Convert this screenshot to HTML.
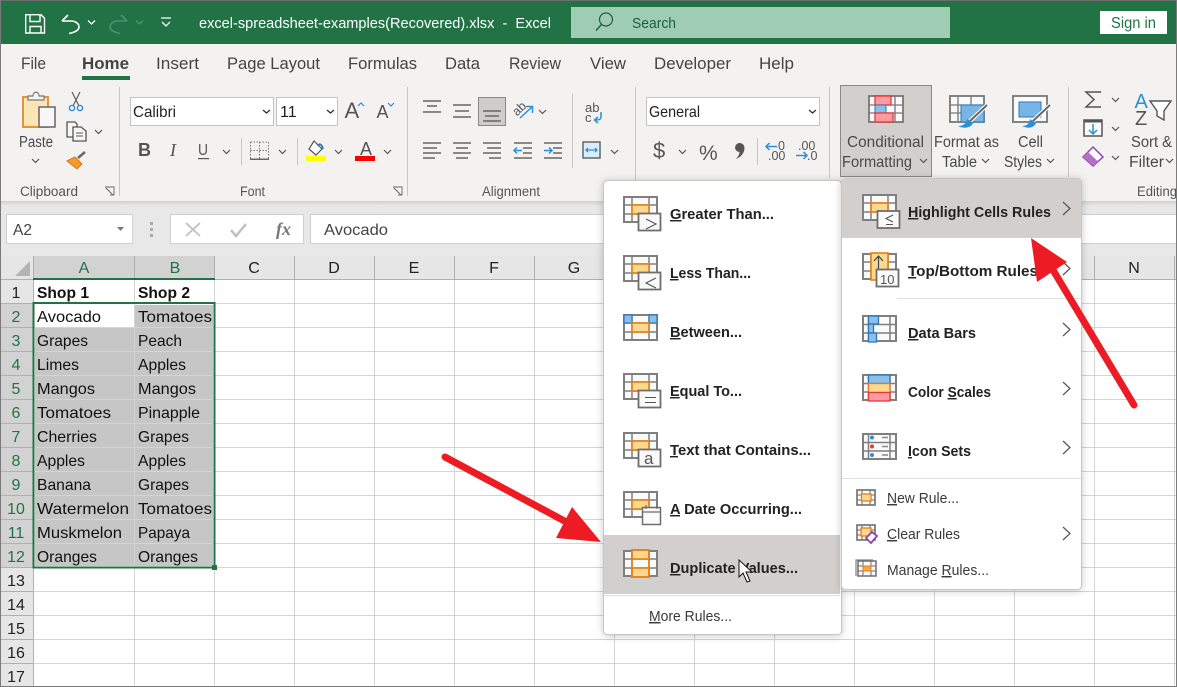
<!DOCTYPE html>
<html lang="en"><head><meta charset="utf-8"><title>Excel</title>
<style>
html,body{margin:0;padding:0;background:#fff;width:1177px;height:687px;overflow:hidden}
svg{display:block;position:absolute;left:0;top:0}
text{font-family:"Liberation Sans",sans-serif;white-space:pre}
.r{font-size:15.5px;fill:#4a4a4a}
.s{font-size:13.5px;fill:#555}
.c{font-size:16px;fill:#111}
.h{font-size:16px;fill:#222;text-anchor:middle}
.hs{font-size:16px;fill:#217346;text-anchor:middle}
.m{font-size:14.5px;font-weight:bold;fill:#222}
.n{font-size:14.5px;fill:#3a3a3a}
.ch{fill:none;stroke:#555;stroke-width:1.2}
.bl{fill:none;stroke:#2b8fd6;stroke-width:1.5}
.ln{stroke:#666;stroke-width:1.5}
</style></head><body>
<svg width="1177" height="687" viewBox="0 0 1177 687" xmlns="http://www.w3.org/2000/svg">
<defs>
<linearGradient id="sh" x1="0" y1="0" x2="0" y2="1"><stop offset="0" stop-color="#d0d0d0"/><stop offset="1" stop-color="#e8e8e8"/></linearGradient>
<g id="g">
<rect x="1" y="1" width="33" height="25" fill="#fafafa" stroke="#7f7f7f" stroke-width="2"/>
<path d="M9 1V26M26 1V26M1 9H34M1 18H34" stroke="#7f7f7f" stroke-width="1.5" fill="none"/>
</g>
<g id="g2">
<rect x="1" y="1" width="33" height="25" fill="#fafafa" stroke="#7f7f7f" stroke-width="2"/>
<path d="M6.500 1V26M28 1V26M1 9.500H34M1 18H34" stroke="#7f7f7f" stroke-width="1.500" fill="none"/>
</g>
<g id="o"><rect x="9" y="9" width="17" height="9" fill="#fbd98e" stroke="#e67e15" stroke-width="1.6"/></g>
<g id="b"><rect x="15.5" y="17.5" width="22" height="17" fill="#fafafa" stroke="#6e6e6e" stroke-width="1.8"/></g>
<g id="sm">
<rect x="1" y="1" width="18" height="15" fill="#fafafa" stroke="#6e6e6e" stroke-width="1.6"/>
<path d="M6 1V16M14 1V16M1 6H19M1 11H19" stroke="#6e6e6e" stroke-width="1.1" fill="none"/>
</g>
<path id="chev" d="M0 0L3.500 3.500L7 0" class="ch"/>
<path id="rchev" d="M0 0L7 6.500L0 13" fill="none" stroke="#555" stroke-width="1.200"/>
</defs>

<rect width="1177" height="687" fill="#fff"/>
<!-- title bar -->
<rect x="0" y="0" width="1177" height="44" fill="#217346"/>
<rect x="0" y="0" width="1177" height="1" fill="#6d6d6d"/>
<g fill="none" stroke="#fff" stroke-width="1.400">
<path d="M25.700 14.700H41L44.500 18.200V33H25.700Z"/><path d="M30 15V21.500H40V15M30 33V26.500H41V33"/>
<path d="M62 21L68 15M62 21H71C76 21 79 24 79 27C79 30 76 32 69 33.500" stroke-width="1.600"/>
<path d="M88 20.500L91.500 24L95 20.500" stroke-width="1.300"/>
</g>
<g fill="none" stroke="#4e9270" stroke-width="1.600">
<path d="M127 21L121 15M127 21H118C113 21 110 24 110 27C110 30 113 32 120 33.500"/>
<path d="M136 20.500L139.500 24L143 20.500" stroke-width="1.300"/>
</g>
<path d="M161 18H171M162 22L166 26L170 22" fill="none" stroke="#fff" stroke-width="1.300"/>
<text x="199" y="28" font-size="15" fill="#fff" textLength="352" lengthAdjust="spacingAndGlyphs">excel-spreadsheet-examples(Recovered).xlsx  -  Excel</text>
<rect x="571" y="7" width="379" height="31" fill="#9fcdb3"/>
<circle cx="606" cy="19.500" r="6.500" fill="none" stroke="#1f5e3a" stroke-width="1.200"/>
<path d="M601.500 24.500L596 30.500" stroke="#1f5e3a" stroke-width="1.400"/>
<text x="632" y="28" font-size="15" fill="#1f5e3a" textLength="44" lengthAdjust="spacingAndGlyphs">Search</text>
<rect x="1100" y="11" width="67" height="23" fill="#fff"/>
<text x="1111" y="28" font-size="15.500" fill="#217346" textLength="45" lengthAdjust="spacingAndGlyphs">Sign in</text>

<!-- ribbon -->
<rect x="0" y="44" width="1177" height="157" fill="#f3f2f1"/>
<rect x="0" y="201" width="1177" height="5" fill="url(#sh)"/>
<rect x="0" y="206" width="1177" height="50" fill="#e8e8e8"/>
<g font-size="17" fill="#444">
<text x="21" y="69" textLength="25" lengthAdjust="spacingAndGlyphs">File</text>
<text x="82" y="69" font-weight="bold" textLength="47" lengthAdjust="spacingAndGlyphs">Home</text>
<text x="156" y="69" textLength="43" lengthAdjust="spacingAndGlyphs">Insert</text>
<text x="227" y="69" textLength="93" lengthAdjust="spacingAndGlyphs">Page Layout</text>
<text x="348" y="69" textLength="69" lengthAdjust="spacingAndGlyphs">Formulas</text>
<text x="445" y="69" textLength="35" lengthAdjust="spacingAndGlyphs">Data</text>
<text x="509" y="69" textLength="52" lengthAdjust="spacingAndGlyphs">Review</text>
<text x="590" y="69" textLength="36" lengthAdjust="spacingAndGlyphs">View</text>
<text x="654" y="69" textLength="77" lengthAdjust="spacingAndGlyphs">Developer</text>
<text x="759" y="69" textLength="35" lengthAdjust="spacingAndGlyphs">Help</text>
</g>
<rect x="82" y="76" width="48" height="4" fill="#217346"/>
<g fill="#c8c6c4">
<rect x="119" y="87" width="1" height="109"/><rect x="407" y="87" width="1" height="109"/>
<rect x="635" y="87" width="1" height="109"/><rect x="829" y="87" width="1" height="91"/>
<rect x="1068" y="87" width="1" height="90"/><rect x="572" y="94" width="1" height="74"/>
<rect x="241" y="138" width="1" height="27"/><rect x="297" y="138" width="1" height="27"/>
<rect x="757" y="138" width="1" height="27"/>
</g>
<!-- clipboard -->
<rect x="23" y="97" width="25" height="30" fill="#fde6b4" stroke="#e08a2e" stroke-width="1.800"/>
<path d="M28 100V96H33C33 91 39 91 39 96H44V100Z" fill="#f3f2f1" stroke="#777" stroke-width="1.200"/>
<rect x="39" y="107" width="16" height="20" fill="#f7f7f7" stroke="#666" stroke-width="1.500"/>
<text x="19" y="147" class="r" textLength="34" lengthAdjust="spacingAndGlyphs">Paste</text>
<use href="#chev" x="32" y="159"/>
<path d="M72 92L79 106M80 92L73 106" stroke="#555" stroke-width="1.100"/>
<circle cx="72" cy="108" r="2.600" fill="none" stroke="#2b8fd6" stroke-width="1.400"/>
<circle cx="80" cy="108" r="2.600" fill="none" stroke="#2b8fd6" stroke-width="1.400"/>
<path d="M67 122H75L77 124V137H67Z" fill="#f7f7f7" stroke="#555" stroke-width="1.300"/>
<path d="M73 127H81L86 131V141H73Z" fill="#f7f7f7" stroke="#555" stroke-width="1.300"/>
<path d="M76 133H83M76 136H83" stroke="#555"/>
<use href="#chev" x="95" y="130"/>
<path d="M67 161L75 157L82 164L77 169Z" fill="#f39a2d" stroke="#d9761a"/>
<path d="M78 158L85 152" stroke="#666" stroke-width="2.500"/>
<text x="20" y="196" class="s" textLength="58" lengthAdjust="spacingAndGlyphs">Clipboard</text>
<path d="M105 187H114V195M106 188L113 195M110 195H114V191" fill="none" stroke="#666" stroke-width=".9"/>
<!-- font -->
<rect x="130.500" y="97.500" width="143" height="28" fill="#fff" stroke="#c4c4c4"/>
<text x="133" y="117" font-size="16" fill="#222" textLength="43" lengthAdjust="spacingAndGlyphs">Calibri</text>
<path d="M263 110L266.500 113L270 110" fill="none" stroke="#333" stroke-width="1.300"/>
<rect x="276.500" y="97.500" width="61" height="28" fill="#fff" stroke="#c4c4c4"/>
<text x="280" y="117" font-size="16" fill="#222">11</text>
<path d="M327 110L330.500 113L334 110" fill="none" stroke="#333" stroke-width="1.300"/>
<text x="344.500" y="118" font-size="22" fill="#555">A</text>
<path d="M358 106L361 103L364 106" fill="none" stroke="#2b8fd6" stroke-width="1.200"/>
<text x="376.500" y="118" font-size="18" fill="#555">A</text>
<path d="M388 103L391 106L394 103" fill="none" stroke="#2b8fd6" stroke-width="1.200"/>
<text x="138" y="156" font-size="18" font-weight="bold" fill="#555">B</text>
<text x="170" y="156" font-size="18" font-style="italic" style="font-family:'Liberation Serif',serif" fill="#555">I</text>
<text x="198" y="155" font-size="16" fill="#555" textLength="10" lengthAdjust="spacingAndGlyphs">U</text>
<rect x="198" y="158" width="11" height="1.200" fill="#555"/>
<use href="#chev" x="223" y="150"/>
<path d="M250.500 142H268.500M250.500 142V159M268.500 142V159M259.500 142V159M250.500 150.500H268.500" stroke="#777" stroke-dasharray="1.500 1.500" fill="none"/>
<rect x="250" y="158.500" width="19" height="1.500" fill="#666"/>
<use href="#chev" x="279" y="150"/>
<path d="M314 141L322 149L316 155L309 149Z" fill="#fff" stroke="#555" stroke-width="1.200"/>
<path d="M318 146C319 143 322 144 323 149" fill="none" stroke="#2b78b8" stroke-width="1.800"/>
<rect x="306" y="156" width="20" height="5" fill="#ffff00"/>
<use href="#chev" x="335" y="150"/>
<text x="360" y="155" font-size="18" fill="#555">A</text>
<rect x="355" y="156" width="20" height="5" fill="#ff0000"/>
<use href="#chev" x="384" y="150"/>
<text x="240" y="196" class="s" textLength="25" lengthAdjust="spacingAndGlyphs">Font</text>
<path d="M393 187H402V195M394 188L401 195M398 195H402V191" fill="none" stroke="#666" stroke-width=".9"/>
<!-- alignment -->
<rect x="478.500" y="97.500" width="27" height="28" fill="#cfcdcb" stroke="#8a8886"/>
<g class="ln" fill="none">
<path d="M423 101H441M427 106H437M423 112H441"/>
<path d="M453 105H471M455 111H469M453 117H471"/>
<path d="M483 111H501M485 116H499M483 121H501"/>
<path d="M423 143H441M423 148H437M423 153H441M423 158H435"/>
<path d="M453 143H471M456 148H468M453 153H471M456 158H468"/>
<path d="M483 143H501M487 148H501M483 153H501M489 158H501"/>
<path d="M514 143H532M523 148H532M523 153H532M514 158H532"/>
<path d="M544 143H562M553 148H562M553 153H562M544 158H562"/>
</g>
<path d="M514 150.500H522M517 147.500L514 150.500L517 153.500M544 150.500H552M549 147.500L552 150.500L549 153.500" fill="none" stroke="#2b8fd6" stroke-width="1.500"/>
<text x="512" y="112" font-size="12.500" fill="#555" transform="rotate(-45 520 108)">ab</text>
<path d="M520 118L532 107M526 106.500H532.500V113" class="bl"/>
<use href="#chev" x="539" y="110"/>
<text x="585" y="112" font-size="13" fill="#555">ab</text>
<text x="585" y="122" font-size="13" fill="#555">c</text>
<path d="M601 112V116C601 120 599 120 595 120M598 117L594.500 120L598 123" class="bl"/>
<rect x="583" y="142" width="17" height="16" fill="#d8ecfa" stroke="#666" stroke-width="1.500"/>
<path d="M586 150H597M588 148L586 150L588 152M595 148L597 150L595 152" fill="none" stroke="#2b8fd6" stroke-width="1.300"/>
<use href="#chev" x="611" y="150"/>
<text x="482" y="196" class="s" textLength="58" lengthAdjust="spacingAndGlyphs">Alignment</text>
<!-- number -->
<rect x="646.500" y="97.500" width="173" height="28" fill="#fff" stroke="#c4c4c4"/>
<text x="649" y="117" font-size="16" fill="#222" textLength="51" lengthAdjust="spacingAndGlyphs">General</text>
<path d="M809 110L812.500 113L816 110" fill="none" stroke="#333" stroke-width="1.300"/>
<text x="653" y="158" font-size="22" fill="#555">$</text>
<use href="#chev" x="679" y="150"/>
<text x="699" y="160" font-size="21" fill="#555">%</text>
<path d="M735 147.500A4.500 4.500 0 1 1 744.500 148C744.500 153 741 157 736 159C738.500 156 739.500 154 739.500 152A4.500 4.500 0 0 1 735 147.500Z" fill="#555"/>
<text x="778" y="150" font-size="12.500" fill="#555">0</text>
<text x="768" y="160" font-size="12.500" fill="#555">.00</text>
<path d="M766 146.500H777M769.500 143L766 146.500L769.500 150" class="bl"/>
<text x="798" y="150" font-size="12.500" fill="#555">.00</text>
<text x="807" y="160" font-size="12.500" fill="#555">.0</text>
<path d="M796 155.500H807M803.500 152L807 155.500L803.500 159" class="bl"/>
<!-- styles -->
<rect x="840.500" y="85.500" width="91" height="91" fill="#d2d0ce" stroke="#8a8886"/>
<rect x="869" y="96" width="34" height="26" fill="#fafafa" stroke="#777" stroke-width="1.800"/>
<path d="M877 96V122M895 96V122M869 105H903M869 113H903" stroke="#777" stroke-width="1.300" fill="none"/>
<rect x="875" y="96" width="16" height="9" fill="#ff9aa2" stroke="#e53935" stroke-width="1.300"/>
<rect x="875" y="105" width="11" height="8" fill="#8cbfea" stroke="#2b78b8" stroke-width="1"/>
<rect x="875" y="113" width="18" height="9" fill="#ff9aa2" stroke="#e53935" stroke-width="1.300"/>
<text x="847" y="147" class="r" textLength="77" lengthAdjust="spacingAndGlyphs">Conditional</text>
<text x="842" y="167" class="r" textLength="70" lengthAdjust="spacingAndGlyphs">Formatting</text>
<use href="#chev" x="920" y="159"/>
<rect x="950" y="96" width="34" height="26" fill="#fafafa" stroke="#777" stroke-width="1.800"/>
<path d="M958 96V122M971 96V122M950 105H984M950 113H984" stroke="#777" stroke-width="1.300" fill="none"/>
<rect x="961" y="105" width="23" height="17" fill="#79b4e6" stroke="#2b78b8"/>
<path d="M987 105L970 121" stroke="#fff" stroke-width="4"/>
<path d="M987 105L970 121" stroke="#666" stroke-width="2"/>
<path d="M958 126C963 126 966 124 967 119L973 123C971 128 964 129 958 126Z" fill="#2b8fd6"/>
<text x="934" y="147" class="r" textLength="65" lengthAdjust="spacingAndGlyphs">Format as</text>
<text x="942" y="167" class="r" textLength="35" lengthAdjust="spacingAndGlyphs">Table</text>
<use href="#chev" x="982" y="159"/>
<rect x="1013" y="96" width="34" height="26" fill="#fafafa" stroke="#777" stroke-width="1.800"/>
<rect x="1019" y="102" width="22" height="15" fill="#79b4e6" stroke="#2b78b8"/>
<path d="M1050 105L1033 121" stroke="#fff" stroke-width="4"/>
<path d="M1050 105L1033 121" stroke="#666" stroke-width="2"/>
<path d="M1022 126C1027 126 1029 124 1030 119L1036 123C1034 128 1028 129 1022 126Z" fill="#2b8fd6"/>
<text x="1018" y="147" class="r" textLength="25" lengthAdjust="spacingAndGlyphs">Cell</text>
<text x="1004" y="167" class="r" textLength="38" lengthAdjust="spacingAndGlyphs">Styles</text>
<use href="#chev" x="1047" y="159"/>
<!-- editing -->
<path d="M1101 92H1086L1094 99.500L1086 107H1101" fill="none" stroke="#555" stroke-width="1.500"/>
<use href="#chev" x="1112" y="98"/>
<rect x="1084" y="120" width="18" height="16" fill="#fafafa" stroke="#555" stroke-width="1.500"/>
<rect x="1084" y="120" width="18" height="2.500" fill="#555"/>
<path d="M1093 124V133M1089 130L1093 134L1097 130" class="bl"/>
<use href="#chev" x="1112" y="127"/>
<path d="M1083 157L1093 147L1103 157L1093 166Z" fill="#fff" stroke="#8e44ad" stroke-width="1.500"/>
<path d="M1083 157L1088 152L1098 161.500L1093 166Z" fill="#b46fc8"/>
<use href="#chev" x="1112" y="156"/>
<text x="1134.500" y="108" font-size="20" fill="#2b8fd6">A</text>
<text x="1135" y="125" font-size="20" fill="#555">Z</text>
<path d="M1150 101H1171L1164 111V120L1157 116V111Z" fill="#fff" stroke="#555" stroke-width="1.400"/>
<text x="1131" y="147" class="r" textLength="41" lengthAdjust="spacingAndGlyphs">Sort &amp;</text>
<text x="1129" y="167" class="r" textLength="35" lengthAdjust="spacingAndGlyphs">Filter</text>
<use href="#chev" x="1166" y="159"/>
<text x="1137" y="196" class="s" textLength="40" lengthAdjust="spacingAndGlyphs">Editing</text>

<!-- formula bar -->
<rect x="6.500" y="214.500" width="126" height="29" fill="#fff" stroke="#d0d0d0"/>
<text x="13" y="235" font-size="16" fill="#444" textLength="19" lengthAdjust="spacingAndGlyphs">A2</text>
<path d="M117 227H124L120.500 231Z" fill="#777"/>
<g fill="#aaa"><rect x="150" y="222" width="3" height="3"/><rect x="150" y="228" width="3" height="3"/><rect x="150" y="234" width="3" height="3"/></g>
<rect x="170.500" y="214.500" width="133" height="29" fill="#fff" stroke="#d0d0d0"/>
<path d="M186 223L200 236M200 223L186 236" stroke="#c0c0c0" stroke-width="1.800"/>
<path d="M231 230L236 236L246 224" fill="none" stroke="#c0c0c0" stroke-width="2.500"/>
<text x="276" y="235" font-size="18" font-style="italic" font-weight="bold" style="font-family:'Liberation Serif',serif" fill="#777">fx</text>
<rect x="310.500" y="214.500" width="870" height="29" fill="#fff" stroke="#d0d0d0"/>
<text x="324" y="235" font-size="16" fill="#444" textLength="64" lengthAdjust="spacingAndGlyphs">Avocado</text>

<!-- sheet -->
<rect x="0" y="256" width="1177" height="23" fill="#e6e6e6"/>
<rect x="0" y="279" width="33" height="408" fill="#e6e6e6"/>
<rect x="33" y="256" width="182" height="23" fill="#d2d2d2"/>
<rect x="0" y="303" width="33" height="264" fill="#d2d2d2"/>
<path d="M15 276H30V261Z" fill="#b4b4b4"/>
<g stroke="#d4d4d4" fill="none">
<path d="M134.500 279V687M214.500 279V687M294.500 279V687M374.500 279V687M454.500 279V687M534.500 279V687M614.500 279V687M694.500 279V687M774.500 279V687M854.500 279V687M934.500 279V687M1014.500 279V687M1094.500 279V687M1174.500 279V687"/>
<path d="M33 303.500H1177M33 327.500H1177M33 351.500H1177M33 375.500H1177M33 399.500H1177M33 423.500H1177M33 447.500H1177M33 471.500H1177M33 495.500H1177M33 519.500H1177M33 543.500H1177M33 567.500H1177M33 591.500H1177M33 615.500H1177M33 639.500H1177M33 663.500H1177"/>
</g>
<g stroke="#b0b0b0" fill="none">
<path d="M33.500 256V687M134.500 256V279M214.500 256V279M294.500 256V279M374.500 256V279M454.500 256V279M534.500 256V279M614.500 256V279M694.500 256V279M774.500 256V279M854.500 256V279M934.500 256V279M1014.500 256V279M1094.500 256V279M1174.500 256V279"/>
<path d="M0 279.500H1177M0 303.500H33M0 327.500H33M0 351.500H33M0 375.500H33M0 399.500H33M0 423.500H33M0 447.500H33M0 471.500H33M0 495.500H33M0 519.500H33M0 543.500H33M0 567.500H33M0 591.500H33M0 615.500H33M0 639.500H33M0 663.500H33"/>
</g>
<rect x="135" y="305" width="78" height="22" fill="#c6c6c6"/>
<g fill="#c6c6c6">
<rect x="35" y="328" width="99" height="23"/><rect x="135" y="328" width="78" height="23"/>
<rect x="35" y="352" width="99" height="23"/><rect x="135" y="352" width="78" height="23"/>
<rect x="35" y="376" width="99" height="23"/><rect x="135" y="376" width="78" height="23"/>
<rect x="35" y="400" width="99" height="23"/><rect x="135" y="400" width="78" height="23"/>
<rect x="35" y="424" width="99" height="23"/><rect x="135" y="424" width="78" height="23"/>
<rect x="35" y="448" width="99" height="23"/><rect x="135" y="448" width="78" height="23"/>
<rect x="35" y="472" width="99" height="23"/><rect x="135" y="472" width="78" height="23"/>
<rect x="35" y="496" width="99" height="23"/><rect x="135" y="496" width="78" height="23"/>
<rect x="35" y="520" width="99" height="23"/><rect x="135" y="520" width="78" height="23"/>
<rect x="35" y="544" width="99" height="22"/><rect x="135" y="544" width="78" height="22"/>
</g>
<rect x="33" y="278" width="182" height="2" fill="#217346"/>
<rect x="33.500" y="303" width="181" height="264.500" fill="none" stroke="#217346" stroke-width="2"/>
<rect x="212" y="565" width="5" height="5" fill="#217346"/>
<text x="84" y="273" class="hs">A</text><text x="175" y="273" class="hs">B</text>
<text x="254" y="273" class="h">C</text><text x="334" y="273" class="h">D</text><text x="414" y="273" class="h">E</text><text x="494" y="273" class="h">F</text><text x="574" y="273" class="h">G</text><text x="1134" y="273" class="h">N</text>
<text x="16" y="298" class="h">1</text>
<text x="16" y="586" class="h">13</text><text x="16" y="610" class="h">14</text><text x="16" y="634" class="h">15</text><text x="16" y="658" class="h">16</text><text x="16" y="682" class="h">17</text>
<text x="16" y="322" class="hs">2</text><text x="16" y="346" class="hs">3</text><text x="16" y="370" class="hs">4</text><text x="16" y="394" class="hs">5</text><text x="16" y="418" class="hs">6</text><text x="16" y="442" class="hs">7</text><text x="16" y="466" class="hs">8</text><text x="16" y="490" class="hs">9</text><text x="16" y="514" class="hs">10</text><text x="16" y="538" class="hs">11</text><text x="16" y="562" class="hs">12</text>
<g class="c">
<text x="37" y="298" font-weight="bold" textLength="52" lengthAdjust="spacingAndGlyphs">Shop 1</text>
<text x="138" y="298" font-weight="bold" textLength="52" lengthAdjust="spacingAndGlyphs">Shop 2</text>
<text x="37" y="322" textLength="64" lengthAdjust="spacingAndGlyphs">Avocado</text>
<text x="138" y="322" textLength="74" lengthAdjust="spacingAndGlyphs">Tomatoes</text>
<text x="37" y="346" textLength="51" lengthAdjust="spacingAndGlyphs">Grapes</text>
<text x="138" y="346" textLength="44" lengthAdjust="spacingAndGlyphs">Peach</text>
<text x="37" y="370" textLength="42" lengthAdjust="spacingAndGlyphs">Limes</text>
<text x="138" y="370" textLength="48" lengthAdjust="spacingAndGlyphs">Apples</text>
<text x="37" y="394" textLength="58" lengthAdjust="spacingAndGlyphs">Mangos</text>
<text x="138" y="394" textLength="58" lengthAdjust="spacingAndGlyphs">Mangos</text>
<text x="37" y="418" textLength="74" lengthAdjust="spacingAndGlyphs">Tomatoes</text>
<text x="138" y="418" textLength="62" lengthAdjust="spacingAndGlyphs">Pinapple</text>
<text x="37" y="442" textLength="60" lengthAdjust="spacingAndGlyphs">Cherries</text>
<text x="138" y="442" textLength="51" lengthAdjust="spacingAndGlyphs">Grapes</text>
<text x="37" y="466" textLength="48" lengthAdjust="spacingAndGlyphs">Apples</text>
<text x="138" y="466" textLength="48" lengthAdjust="spacingAndGlyphs">Apples</text>
<text x="37" y="490" textLength="54" lengthAdjust="spacingAndGlyphs">Banana</text>
<text x="138" y="490" textLength="51" lengthAdjust="spacingAndGlyphs">Grapes</text>
<text x="37" y="514" textLength="92" lengthAdjust="spacingAndGlyphs">Watermelon</text>
<text x="138" y="514" textLength="74" lengthAdjust="spacingAndGlyphs">Tomatoes</text>
<text x="37" y="538" textLength="85" lengthAdjust="spacingAndGlyphs">Muskmelon</text>
<text x="138" y="538" textLength="52" lengthAdjust="spacingAndGlyphs">Papaya</text>
<text x="37" y="562" textLength="60" lengthAdjust="spacingAndGlyphs">Oranges</text>
<text x="138" y="562" textLength="60" lengthAdjust="spacingAndGlyphs">Oranges</text>
</g>

<!-- menu 1 -->
<rect x="603.500" y="180.500" width="238" height="454" rx="4" fill="#fff" stroke="#c8c6c4" style="filter:drop-shadow(0 1px 4px rgba(0,0,0,.22))"/>
<rect x="604" y="535" width="236" height="59" fill="#d2d0ce"/>
<rect x="604" y="595" width="236" height="1" fill="#e1dfdd"/>
<use href="#g" x="623" y="196"/><use href="#o" x="623" y="196"/><use href="#b" x="623" y="196"/>
<path d="M646 219L656 224L646 229" fill="none" stroke="#555" stroke-width="1.100"/>
<use href="#g" x="623" y="255"/><use href="#o" x="623" y="255"/><use href="#b" x="623" y="255"/>
<path d="M656 278L646 283L656 288" fill="none" stroke="#555" stroke-width="1.100"/>
<use href="#g" x="623" y="314"/>
<rect x="624" y="315" width="8" height="8" fill="#8cbfea" stroke="#2b78b8" stroke-width="1.200"/>
<rect x="649" y="315" width="8" height="8" fill="#8cbfea" stroke="#2b78b8" stroke-width="1.200"/>
<use href="#o" x="623" y="314"/>
<use href="#g" x="623" y="373"/><use href="#o" x="623" y="373"/><use href="#b" x="623" y="373"/>
<path d="M645 397.500H656M645 402.500H656" stroke="#555" stroke-width="1.100"/>
<use href="#g" x="623" y="432"/><use href="#o" x="623" y="432"/><use href="#b" x="623" y="432"/>
<text x="644" y="464" font-size="17" fill="#555">a</text>
<use href="#g" x="623" y="491"/><use href="#o" x="623" y="491"/>
<rect x="642.500" y="507.500" width="18" height="17" fill="#fafafa" stroke="#6e6e6e" stroke-width="1.500"/>
<path d="M642 512H661M646 505V509M657 505V509" stroke="#6e6e6e" stroke-width="1.200"/>
<use href="#g" x="623" y="550"/>
<rect x="632" y="550" width="17" height="9" fill="#fbd98e" stroke="#e67e15" stroke-width="1.600"/>
<rect x="632" y="568" width="17" height="9" fill="#fbd98e" stroke="#e67e15" stroke-width="1.600"/>
<rect x="632" y="550" width="17" height="27" fill="none" stroke="#e67e15" stroke-width="1.600"/>
<text x="670" y="219" class="m" textLength="104" lengthAdjust="spacingAndGlyphs"><tspan text-decoration="underline">G</tspan>reater Than...</text>
<text x="670" y="278" class="m" textLength="81" lengthAdjust="spacingAndGlyphs"><tspan text-decoration="underline">L</tspan>ess Than...</text>
<text x="670" y="337" class="m" textLength="72" lengthAdjust="spacingAndGlyphs"><tspan text-decoration="underline">B</tspan>etween...</text>
<text x="670" y="396" class="m" textLength="72" lengthAdjust="spacingAndGlyphs"><tspan text-decoration="underline">E</tspan>qual To...</text>
<text x="670" y="455" class="m" textLength="141" lengthAdjust="spacingAndGlyphs"><tspan text-decoration="underline">T</tspan>ext that Contains...</text>
<text x="670" y="514" class="m" textLength="132" lengthAdjust="spacingAndGlyphs"><tspan text-decoration="underline">A</tspan> Date Occurring...</text>
<text x="670" y="573" class="m" textLength="128" lengthAdjust="spacingAndGlyphs"><tspan text-decoration="underline">D</tspan>uplicate Values...</text>
<text x="649" y="621" class="n" textLength="83" lengthAdjust="spacingAndGlyphs"><tspan text-decoration="underline">M</tspan>ore Rules...</text>

<!-- menu 2 -->
<rect x="841.500" y="178.500" width="240" height="411" rx="4" fill="#fff" stroke="#c8c6c4" style="filter:drop-shadow(0 1px 4px rgba(0,0,0,.22))"/>
<rect x="842" y="179" width="239" height="59" fill="#d2d0ce"/>
<rect x="897" y="298" width="184" height="1" fill="#e1dfdd"/>
<rect x="842" y="478" width="239" height="1" fill="#e1dfdd"/>
<use href="#g" x="862" y="194"/><use href="#o" x="862" y="194"/><use href="#b" x="862" y="193.500"/>
<path d="M893 215L886 218.500L893 222M886 224.500H893" fill="none" stroke="#555" stroke-width="1.100"/>
<use href="#g" x="862" y="253"/>
<rect x="871" y="253" width="17" height="27" fill="#fbd98e" stroke="#e67e15" stroke-width="1.600"/>
<path d="M878.500 257V270M874 261L878.500 256L883 261" fill="none" stroke="#444" stroke-width="1.200"/>
<use href="#b" x="861" y="252"/>
<text x="880" y="284" font-size="13" fill="#555">10</text>
<use href="#g2" x="862" y="315"/>
<rect x="868.500" y="316" width="10" height="8" fill="#8cbfea" stroke="#2b78b8" stroke-width="1.300"/>
<rect x="868.500" y="324" width="5" height="9" fill="#8cbfea" stroke="#2b78b8" stroke-width="1.300"/>
<rect x="868.500" y="333" width="8" height="9" fill="#8cbfea" stroke="#2b78b8" stroke-width="1.300"/>
<use href="#g2" x="862" y="374"/>
<rect x="868.500" y="375" width="21.500" height="8.500" fill="#8cbfea" stroke="#2b78b8" stroke-width="1.300"/>
<rect x="868.500" y="383.500" width="21.500" height="9" fill="#fbd98e" stroke="#e67e15" stroke-width="1.300"/>
<rect x="868.500" y="392.500" width="21.500" height="8.500" fill="#ff9aa2" stroke="#e53935" stroke-width="1.300"/>
<use href="#g2" x="862" y="433"/>
<circle cx="872" cy="437.500" r="2" fill="#2b8fd6"/><circle cx="872" cy="446.500" r="2" fill="#e53935"/><circle cx="872" cy="455" r="2" fill="#2b8fd6"/>
<path d="M882 437.500H888M882 446.500H888M882 455H888" stroke="#888" stroke-width="1.500"/>
<use href="#sm" x="856" y="489"/>
<rect x="861.500" y="494" width="9.500" height="7" fill="#fbd98e" stroke="#e67e15" stroke-width="1.300"/>
<use href="#sm" x="856" y="524"/>
<rect x="861" y="528" width="10" height="8" fill="#fbd98e" stroke="#e67e15" stroke-width="1.300"/>
<path d="M866 538L872 532L877 536L871 543Z" fill="#fff" stroke="#8e44ad" stroke-width="1.800"/>
<path d="M856 576V560H873" fill="none" stroke="#888" stroke-width="1.300"/>
<rect x="858" y="561" width="18" height="15" fill="#fafafa" stroke="#6e6e6e" stroke-width="1.500"/>
<path d="M863 561V576M871 561V576M858 566H876M858 571H876" stroke="#6e6e6e"/>
<rect x="863" y="566" width="8" height="5" fill="#f4a742" stroke="#e67e15"/>
<text x="908" y="217" class="m" textLength="143" lengthAdjust="spacingAndGlyphs"><tspan text-decoration="underline">H</tspan>ighlight Cells Rules</text>
<text x="908" y="276" class="m" textLength="130" lengthAdjust="spacingAndGlyphs"><tspan text-decoration="underline">T</tspan>op/Bottom Rules</text>
<text x="908" y="338" class="m" textLength="68" lengthAdjust="spacingAndGlyphs"><tspan text-decoration="underline">D</tspan>ata Bars</text>
<text x="908" y="397" class="m" textLength="83" lengthAdjust="spacingAndGlyphs">Color <tspan text-decoration="underline">S</tspan>cales</text>
<text x="908" y="456" class="m" textLength="63" lengthAdjust="spacingAndGlyphs"><tspan text-decoration="underline">I</tspan>con Sets</text>
<text x="887" y="503" class="n" textLength="72" lengthAdjust="spacingAndGlyphs"><tspan text-decoration="underline">N</tspan>ew Rule...</text>
<text x="887" y="539" class="n" textLength="73" lengthAdjust="spacingAndGlyphs"><tspan text-decoration="underline">C</tspan>lear Rules</text>
<text x="887" y="575" class="n" textLength="102" lengthAdjust="spacingAndGlyphs">Manage <tspan text-decoration="underline">R</tspan>ules...</text>
<use href="#rchev" x="1063" y="202"/><use href="#rchev" x="1063" y="262"/><use href="#rchev" x="1063" y="323"/><use href="#rchev" x="1063" y="382"/><use href="#rchev" x="1063" y="441"/><use href="#rchev" x="1063" y="527"/>

<!-- cursor -->
<path d="M739 560V577L743 573L747 582L750 581L746 572L752 572Z" fill="#fff" stroke="#111"/>

<!-- red arrows -->
<path d="M1134 405L1053 270" stroke="#ed1c24" stroke-width="7" stroke-linecap="round" fill="none"/>
<path d="M1031 238L1067 262L1037 282Z" fill="#ed1c24"/>
<path d="M445 457L572 525" stroke="#ed1c24" stroke-width="7" stroke-linecap="round" fill="none"/>
<path d="M601 542L556 538L572 507Z" fill="#ed1c24"/>
<!-- window border -->
<rect x="0" y="0" width="1" height="687" fill="#7a7a7a"/>
<rect x="1176" y="0" width="1" height="687" fill="#7a7a7a"/>
<rect x="0" y="686" width="1177" height="1" fill="#7a7a7a"/>
</svg>
</body></html>
